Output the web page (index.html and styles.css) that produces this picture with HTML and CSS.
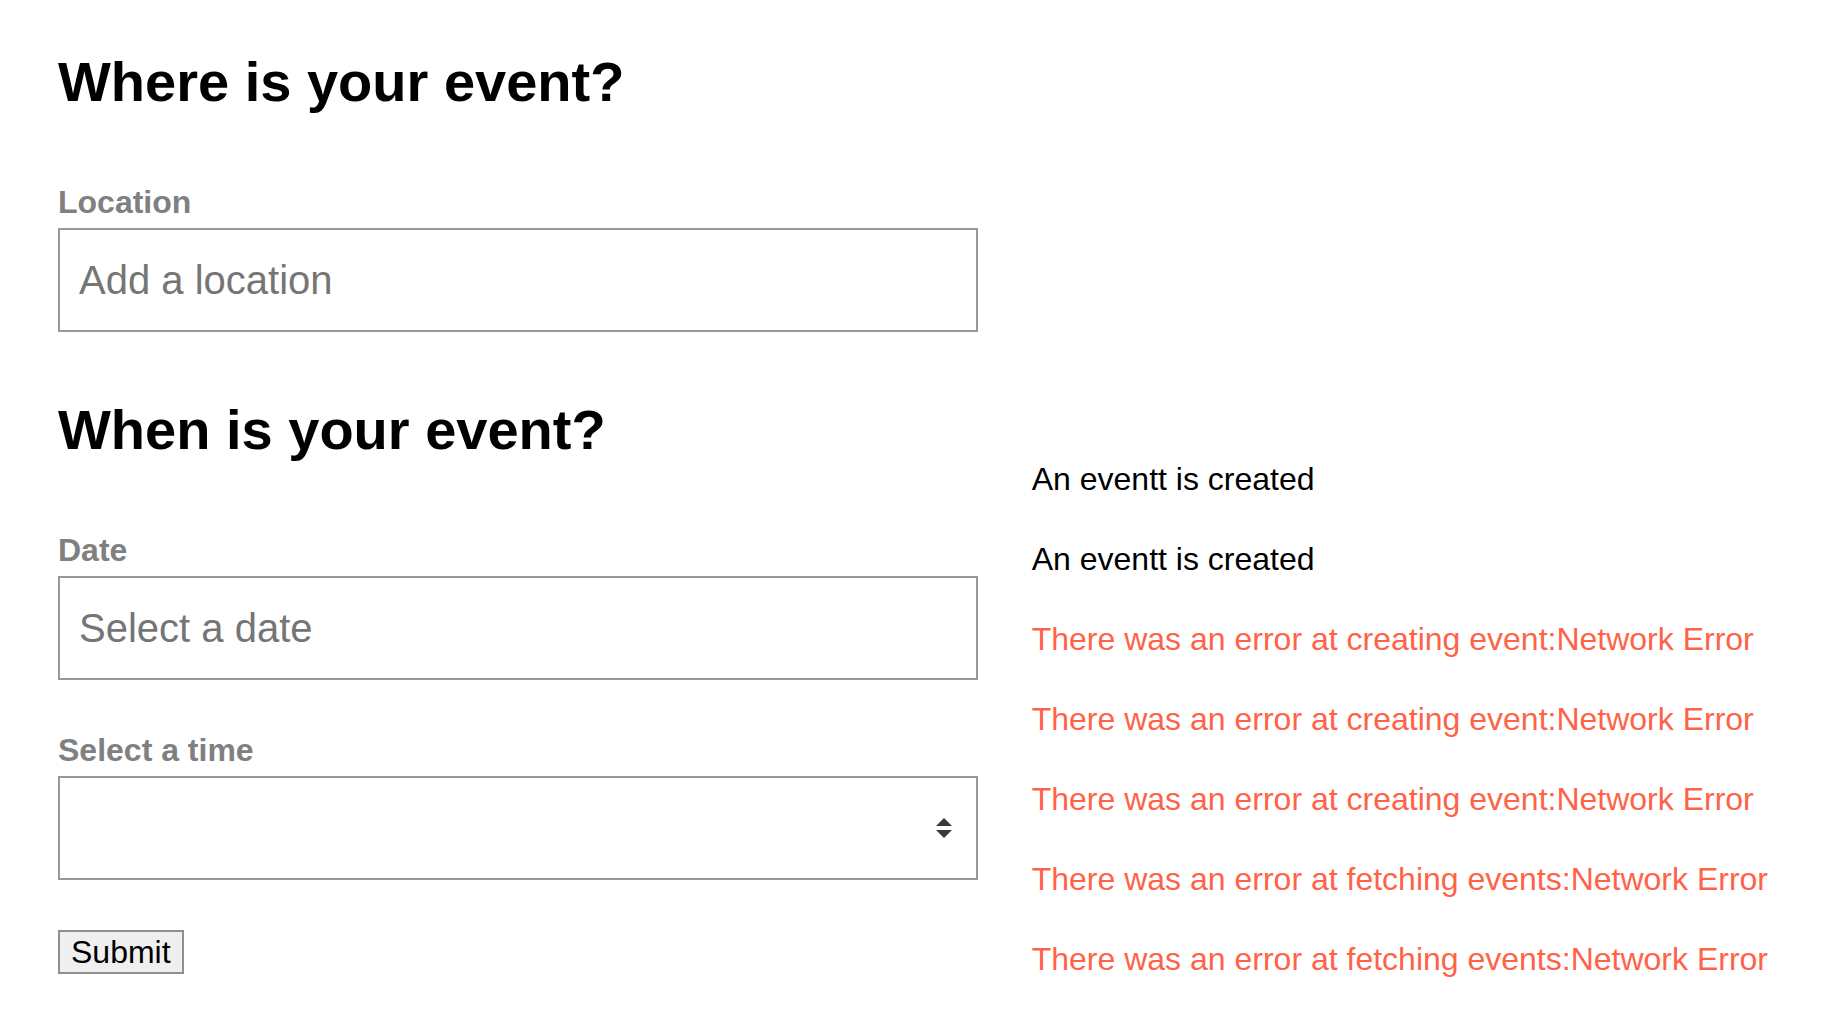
FILE: index.html
```html
<!DOCTYPE html>
<html lang="en">
<head>
<meta charset="utf-8">
<title>Create event</title>
<link rel="stylesheet" href="styles.css">
</head>
<body>
<main class="page">
  <form class="event-form">
    <h2 class="heading">Where is your event?</h2>
    <div class="field">
      <label class="label" for="location">Location</label>
      <input class="control" id="location" type="text" placeholder="Add a location">
    </div>
    <h2 class="heading">When is your event?</h2>
    <div class="field">
      <label class="label" for="date">Date</label>
      <input class="control" id="date" type="text" placeholder="Select a date">
    </div>
    <div class="field">
      <label class="label" for="time">Select a time</label>
      <div class="select-wrap">
        <select class="control" id="time"><option></option></select>
        <svg class="arrows" viewBox="0 0 16 20" aria-hidden="true"><path d="M0 8 8 0l8 8zM0 12h16l-8 8z"/></svg>
      </div>
    </div>
    <button class="submit" type="button">Submit</button>
  </form>
  <section class="notices" aria-live="polite">
    <p class="notice">An eventt is created</p>
    <p class="notice">An eventt is created</p>
    <p class="notice error">There was an error at creating event:Network Error</p>
    <p class="notice error">There was an error at creating event:Network Error</p>
    <p class="notice error">There was an error at creating event:Network Error</p>
    <p class="notice error">There was an error at fetching events:Network Error</p>
    <p class="notice error">There was an error at fetching events:Network Error</p>
  </section>
</main>
</body>
</html>
```

FILE: styles.css
```css
* {
  box-sizing: border-box;
}

body {
  margin: 0;
  background: #fff;
  color: #000;
  font-family: "Liberation Sans", Arial, sans-serif;
  font-size: 32px;
  line-height: 40px;
}

.page {
  display: flex;
  align-items: flex-end;
  gap: 54px;
  padding: 46px 58px 30px;
}

.event-form {
  flex: 1;
  padding-bottom: 5px;
}

.heading {
  margin: 0 0 64px;
  font-size: 56px;
  line-height: 72px;
}

.field {
  margin-bottom: 50px;
}

.field + .heading {
  margin-top: 62px;
}

.label {
  display: block;
  margin-bottom: 6px;
  color: #808080;
  font-weight: bold;
}

.control {
  display: block;
  width: 100%;
  height: 104px;
  padding: 0 19px;
  border: 2px solid #999;
  border-radius: 0;
  background: #fff;
  color: #000;
  font: inherit;
  font-size: 40px;
  appearance: none;
}

.control::placeholder {
  color: #757575;
  opacity: 1;
}

.select-wrap {
  position: relative;
}

.arrows {
  position: absolute;
  top: 42px;
  right: 26px;
  width: 16px;
  height: 20px;
  fill: #343a40;
  pointer-events: none;
}

.submit {
  display: block;
  padding: 0 11px;
  border: 2px solid #8f8f8f;
  border-radius: 0;
  background: #efefef;
  color: #000;
  font: inherit;
}

.notice {
  margin: 0 0 40px;
}

.notice:last-child {
  margin-bottom: 0;
}

.error {
  color: #ff6347;
}
```
